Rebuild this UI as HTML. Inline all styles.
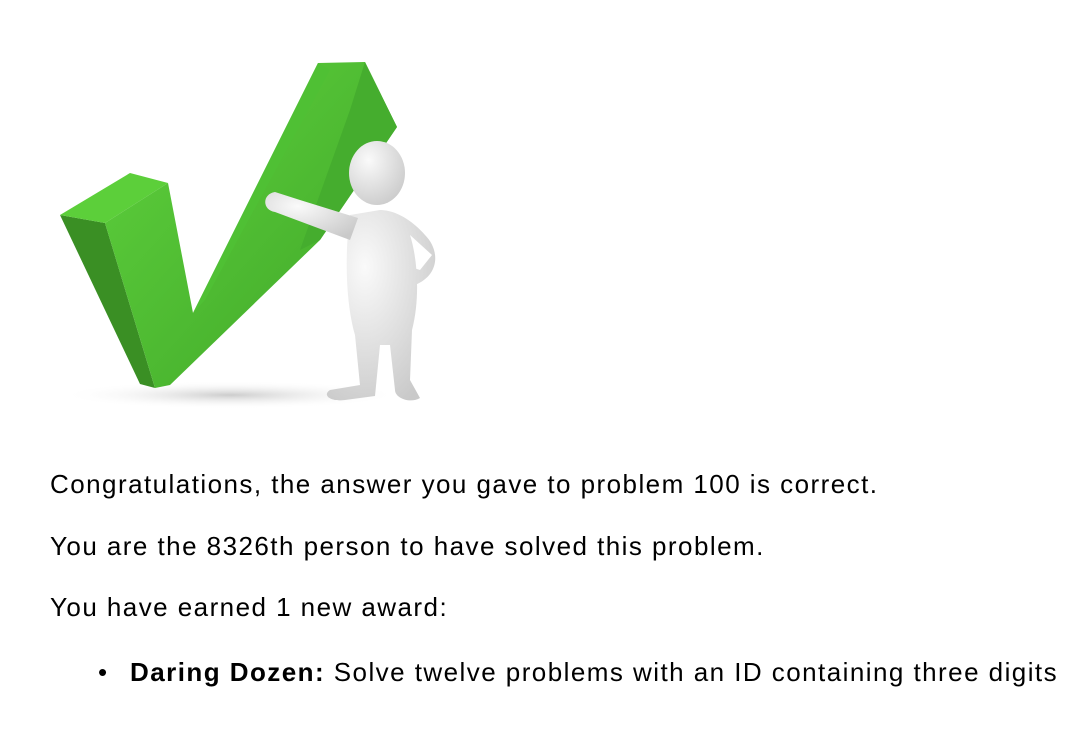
<!DOCTYPE html>
<html><head><meta charset="utf-8"><style>
html,body{margin:0;padding:0;background:#fff;width:1068px;height:730px;overflow:hidden}
body{font-family:"Liberation Sans",sans-serif;font-size:26px;color:#000;position:relative}
.t{position:absolute;left:50px;white-space:nowrap;line-height:30px;letter-spacing:1.45px}
</style></head><body>
<svg width="460" height="420" style="position:absolute;left:0;top:0">
<defs>
<linearGradient id="g1" x1="0" y1="0" x2="1" y2="1"><stop offset="0" stop-color="#5fd13d"/><stop offset="1" stop-color="#3fa628"/></linearGradient>
<radialGradient id="w" cx="0.35" cy="0.3" r="0.8"><stop offset="0" stop-color="#fafafa"/><stop offset="1" stop-color="#c9c9c9"/></radialGradient>
<radialGradient id="sh" cx="0.5" cy="0.5" r="0.5"><stop offset="0" stop-color="#ccc"/><stop offset="1" stop-color="#fff" stop-opacity="0"/></radialGradient>
</defs>
<ellipse cx="230" cy="395" rx="170" ry="14" fill="url(#sh)"/>
<polygon points="60,215 105,223 155,388 140,384" fill="#3a8f24"/>
<polygon points="60,215 130,173 168,183 105,223" fill="#5ccf3a"/>
<polygon points="105,223 168,183 193,313 318,63 365,62 397,127 320,240 170,385 155,388" fill="url(#g1)"/>
<polygon points="365,62 397,127 320,240 300,250 350,110" fill="#45ad2e"/>
<polygon points="193,313 318,63 330,70 205,300" fill="#4fc034"/>
<g fill="url(#w)">
<path d="M350,215 C345,250 345,300 355,335 L360,385 L330,390 C322,395 330,402 345,400 L375,396 L380,345 L390,345 L395,390 C395,398 410,404 420,398 L410,380 L412,330 C420,300 418,260 410,235 L432,255 L420,270 L395,262 L390,275 L415,285 C440,275 440,250 425,235 C412,220 395,210 380,210 Z"/>
<path d="M358,218 L300,200 L275,192 C262,194 262,210 275,212 L350,240 Z"/>
<ellipse cx="377" cy="173" rx="28" ry="32"/>
</g>
</svg>
<div class="t" style="top:469px">Congratulations, the answer you gave to problem 100 is correct.</div>
<div class="t" style="top:531px">You are the 8326th person to have solved this problem.</div>
<div class="t" style="top:592px">You have earned 1 new award:</div>
<div class="t" style="top:657px;left:98px"><span style="display:inline-block;width:32px">•</span><b>Daring Dozen:</b> Solve twelve problems with an ID containing three digits</div>
</body></html>
